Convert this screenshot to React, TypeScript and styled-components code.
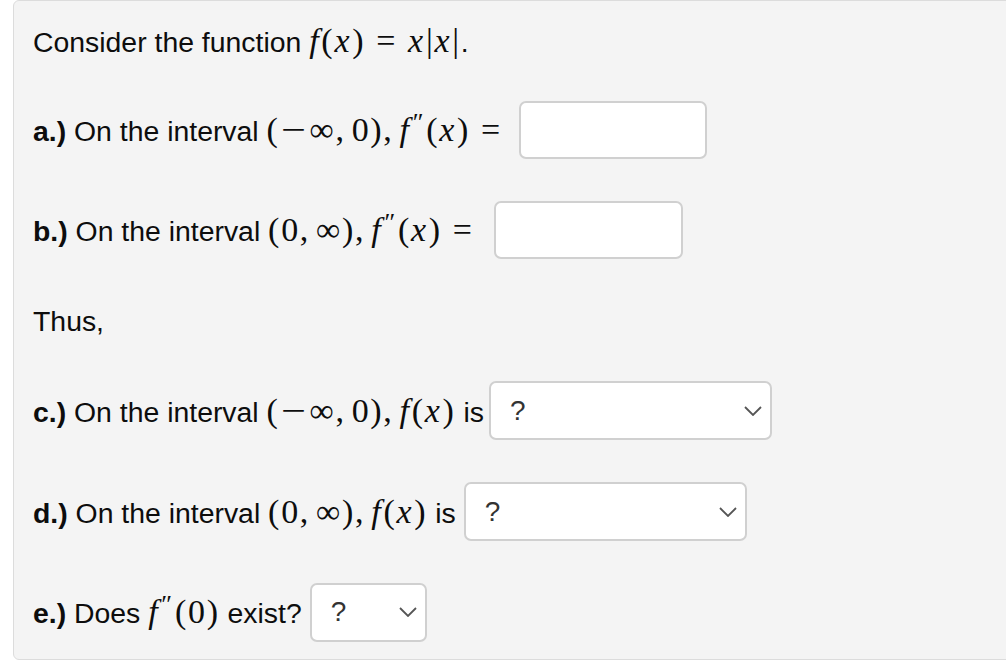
import React from "react";
import styled, { createGlobalStyle } from "styled-components";

const GlobalStyle = createGlobalStyle`
  html, body {
    margin: 0;
    padding: 0;
    background: #ffffff;
  }
  body {
    font-family: "Liberation Sans", Arial, sans-serif;
  }
`;

const Page = styled.div`
  width: 1006px;
  height: 662px;
  overflow: hidden;
  padding-left: 13px;
  box-sizing: border-box;
`;

const Panel = styled.div`
  width: 1000px;
  height: 660px;
  box-sizing: border-box;
  background: #f4f4f4;
  border: 1px solid #dcdcdc;
  border-radius: 6px;
  padding: 25px 0 0 19px;
  display: flex;
  flex-direction: column;
`;

const Line = styled.div<{ $mt: number; $h: number }>`
  display: flex;
  align-items: center;
  margin-top: ${({ $mt }) => $mt}px;
  height: ${({ $h }) => $h}px;
  font-size: 28.4px;
  color: #0d0d0d;
`;

const Sentence = styled.span`
  white-space: pre;
`;

const Label = styled.b`
  font-weight: 700;
`;

const Math = styled.span`
  font-family: "Liberation Serif", "Times New Roman", serif;
  font-size: 34px;
  letter-spacing: 1.7px;
`;

const V = styled.i`
  font-style: italic;
  padding-right: 1px;
`;

const Rel = styled.span`
  margin: 0 11px;
`;

const Minus = styled.span`
  display: inline-block;
  margin: 0 5px 0 4px;
  transform: scaleX(1.3);
`;

const Comma = styled.span`
  margin-right: 6px;
`;

const Prime = styled.span`
  font-style: normal;
  font-size: 26px;
  position: relative;
  top: -10px;
  margin: 0 1px 0 1px;
`;

const Input = styled.input<{ $w: number; $ml: number }>`
  width: ${({ $w }) => $w}px;
  height: 58px;
  margin-left: ${({ $ml }) => $ml}px;
  box-sizing: border-box;
  border: 2px solid #d0d0d0;
  border-radius: 7px;
  background: #fff;
  outline: none;
`;

const Select = styled.div<{ $w: number; $ml: number }>`
  width: ${({ $w }) => $w}px;
  height: 59px;
  margin-left: ${({ $ml }) => $ml}px;
  box-sizing: border-box;
  border: 2px solid #d0d0d0;
  border-radius: 7px;
  background: #fff;
  display: flex;
  align-items: center;
  justify-content: space-between;
  padding: 0 8px 0 19px;
  color: #333;
  font-size: 28px;
`;

const Chevron = () => (
  <svg width="18" height="10" viewBox="0 0 18 10">
    <path d="M1 1 L9 9 L17 1" fill="none" stroke="#555" strokeWidth="1.8" />
  </svg>
);

const Dropdown = ({ w, ml }: { w: number; ml: number }) => (
  <Select $w={w} $ml={ml}>
    <span>?</span>
    <Chevron />
  </Select>
);

const Fx = () => (
  <>
    <V>f</V>(<V>x</V>)
  </>
);

const Fpp = ({ arg }: { arg: React.ReactNode }) => (
  <>
    <V>f</V>
    <Prime>″</Prime>({arg})
  </>
);

export default function App() {
  return (
    <>
      <GlobalStyle />
      <Page>
        <Panel>
          <Line $mt={0} $h={30}>
            <Sentence>
              Consider the function{" "}
              <Math>
                <Fx />
                <Rel>=</Rel>
                <V>x</V>|<V>x</V>|
              </Math>
              .
            </Sentence>
          </Line>

          <Line $mt={45} $h={58}>
            <Sentence>
              <Label>a.)</Label> On the interval{" "}
              <Math>
                (<Minus>−</Minus>∞<Comma>,</Comma>0)<Comma>,</Comma>
                <Fpp arg={<V>x</V>} />
                <Rel>=</Rel>
              </Math>
            </Sentence>
            <Input $w={188} $ml={6} />
          </Line>

          <Line $mt={42} $h={58}>
            <Sentence>
              <Label>b.)</Label> On the interval{" "}
              <Math>
                (0<Comma>,</Comma>∞)<Comma>,</Comma>
                <Fpp arg={<V>x</V>} />
                <Rel>=</Rel>
              </Math>
            </Sentence>
            <Input $w={189} $ml={9} />
          </Line>

          <Line $mt={47} $h={30}>
            <Sentence>Thus,</Sentence>
          </Line>

          <Line $mt={45} $h={59}>
            <Sentence>
              <Label>c.)</Label> On the interval{" "}
              <Math>
                (<Minus>−</Minus>∞<Comma>,</Comma>0)<Comma>,</Comma>
                <Fx />
              </Math>{" "}
              is
            </Sentence>
            <Dropdown w={283} ml={5} />
          </Line>

          <Line $mt={42} $h={59}>
            <Sentence>
              <Label>d.)</Label> On the interval{" "}
              <Math>
                (0<Comma>,</Comma>∞)<Comma>,</Comma>
                <Fx />
              </Math>{" "}
              is
            </Sentence>
            <Dropdown w={283} ml={8} />
          </Line>

          <Line $mt={42} $h={58}>
            <Sentence>
              <Label>e.)</Label> Does{" "}
              <Math>
                <Fpp arg={<span>0</span>} />
              </Math>{" "}
              exist?
            </Sentence>
            <Dropdown w={117} ml={8} />
          </Line>
        </Panel>
      </Page>
    </>
  );
}
